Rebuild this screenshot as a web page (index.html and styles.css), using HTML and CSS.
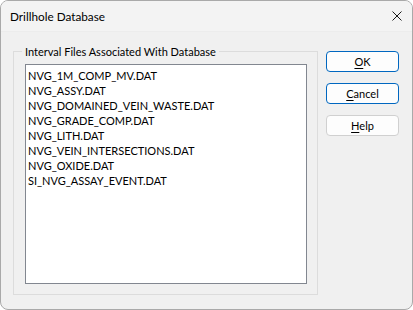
FILE: index.html
```html
<!DOCTYPE html>
<html>
<head>
<meta charset="utf-8">
<link rel="stylesheet" href="styles.css">
</head>
<body>
<div class="window">
  <div class="titlebar">
    <span class="title">Drillhole Database</span>
    <svg class="close" width="10" height="10" viewBox="0 0 10 10"><path d="M0.5 0.5 L9.5 9.5 M9.5 0.5 L0.5 9.5" stroke="#1a1a1a" stroke-width="1" fill="none"/></svg>
  </div>
  <div class="content">
    <div class="group">
      <span class="group-title">Interval Files Associated With Database</span>
      <div class="listbox">
        <div class="item">NVG_1M_COMP_MV.DAT</div>
        <div class="item">NVG_ASSY.DAT</div>
        <div class="item">NVG_DOMAINED_VEIN_WASTE.DAT</div>
        <div class="item">NVG_GRADE_COMP.DAT</div>
        <div class="item">NVG_LITH.DAT</div>
        <div class="item">NVG_VEIN_INTERSECTIONS.DAT</div>
        <div class="item">NVG_OXIDE.DAT</div>
        <div class="item">SI_NVG_ASSAY_EVENT.DAT</div>
      </div>
    </div>
    <div class="buttons">
      <button class="btn primary"><u>O</u>K</button>
      <button class="btn primary"><u>C</u>ancel</button>
      <button class="btn"><u>H</u>elp</button>
    </div>
  </div>
</div>
</body>
</html>
```
FILE: styles.css
```css
html, body {
  margin: 0;
  padding: 0;
  background: #ffffff;
}
body {
  font-family: "Lato", "Roboto", sans-serif;
  font-size: 11px;
  color: #000;
}
.window {
  box-sizing: border-box;
  width: 413px;
  height: 310px;
  border: 1px solid #a9a9a9;
  border-radius: 8px;
  background: #f0f0f0;
  overflow: hidden;
  display: flex;
  flex-direction: column;
}
.titlebar {
  height: 30px;
  background: #f3f3f3;
  border-bottom: 1px solid #ececec;
  display: flex;
  align-items: center;
  justify-content: space-between;
  padding: 0 10px 0 9px;
  flex: none;
}
.title {
  font-size: 11.75px;
  line-height: 15px;
  margin-top: 1px;
}
.close {
  margin-top: -1px;
}
.content {
  display: flex;
  padding: 19px 0 0 12px;
  gap: 8px;
}
.group {
  position: relative;
  box-sizing: border-box;
  width: 305px;
  height: 244px;
  border: 1px solid #dcdcdc;
  padding: 12px 10px 11px 11px;
}
.group-title {
  position: absolute;
  left: 8px;
  top: -8px;
  padding: 0 3px;
  background: #f0f0f0;
  line-height: 15px;
}
.listbox {
  box-sizing: border-box;
  width: 282px;
  height: 220px;
  background: #fff;
  border: 1px solid #828790;
  padding: 3px 2px;
}
.item {
  line-height: 15px;
  height: 15px;
  white-space: nowrap;
}
.buttons {
  display: flex;
  flex-direction: column;
  gap: 11px;
}
.btn {
  box-sizing: border-box;
  width: 73px;
  height: 21px;
  padding: 0;
  font-family: inherit;
  font-size: 11px;
  color: #000;
  background: #fdfdfd;
  border: 1px solid #d0d0d0;
  border-radius: 4px;
}
.btn.primary {
  border-color: #0067c0;
}
.btn u {
  text-decoration-thickness: 1px;
  text-underline-offset: 2px;
}
```
